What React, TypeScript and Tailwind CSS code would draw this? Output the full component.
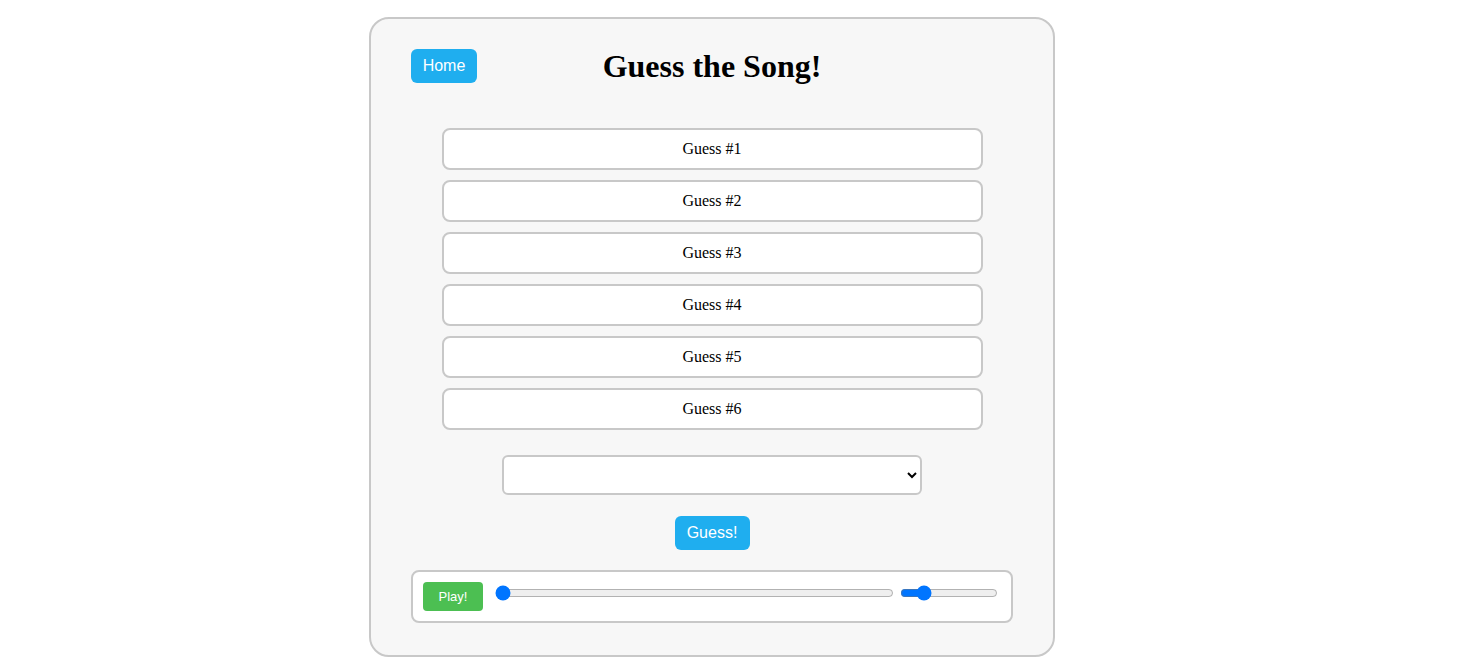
import { useState } from 'react';

const GUESSES = [1, 2, 3, 4, 5, 6];

export default function App() {
  const [pos, setPos] = useState(0);
  const [vol, setVol] = useState(20);

  return (
    <div className="min-h-screen bg-white flex pl-[369px] pt-[17px] font-['Liberation_Serif',serif]">
      <div className="w-[686px] h-[640px] bg-[#f7f7f7] border-2 border-[#c8c8c8] rounded-[20px] px-[40px] pt-[30px] pb-[31px] flex flex-col">
        {/* Header */}
        <div className="flex items-center h-[34px]">
          <button className="w-[66px] h-[34px] rounded-[6px] bg-[#1faeef] text-white text-[16px] font-['Liberation_Sans',Arial,sans-serif]">
            Home
          </button>
          <h1 className="flex-1 text-center text-[32px] font-bold leading-none text-black">Guess the Song!</h1>
          <div className="w-[66px]" />
        </div>

        {/* Guess slots */}
        <div className="flex flex-col items-center gap-[10px] mt-[45px]">
          {GUESSES.map(n => (
            <div key={n}
              className="w-[541px] h-[42px] bg-white border-2 border-[#c8c8c8] rounded-[8px] flex items-center justify-center text-[16px] text-black">
              Guess #{n}
            </div>
          ))}
        </div>

        {/* Song picker */}
        <div className="flex justify-center mt-[25px]">
          <select className="block w-[420px] h-[40px] min-h-[40px] bg-white border-2 border-[#c8c8c8] rounded-[6px] pl-2 pr-[10px] text-[14px]">
            <option value=""></option>
          </select>
        </div>

        <div className="flex justify-center mt-[21px]">
          <button className="w-[75px] h-[34px] rounded-[6px] bg-[#1faeef] text-white text-[16px] font-['Liberation_Sans',Arial,sans-serif]">
            Guess!
          </button>
        </div>

        {/* Player */}
        <div className="mt-[20px] bg-white border-2 border-[#c8c8c8] rounded-[8px] p-[10px] flex items-start">
          <button className="w-[60px] h-[29px] rounded-[4px] bg-[#4cbf52] text-white text-[13px] font-['Liberation_Sans',Arial,sans-serif]">
            Play!
          </button>
          <input type="range" min={0} max={100} value={pos} onChange={e => setPos(Number(e.target.value))}
            className="ml-[12px] mt-[3px] w-[399px] h-[16px]" />
          <input type="range" min={0} max={100} value={vol} onChange={e => setVol(Number(e.target.value))}
            className="ml-[6px] mt-[3px] w-[98px] h-[16px]" />
        </div>
      </div>
    </div>
  );
}
